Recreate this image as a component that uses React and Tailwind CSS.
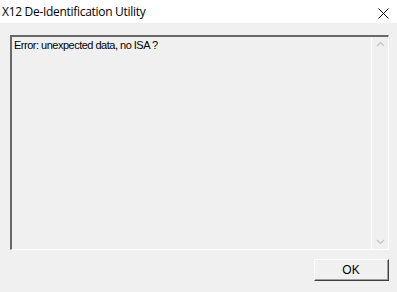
export default function App() {
  return (
    <div className="w-[397px] h-[292px] bg-[#f0f0f0] flex flex-col overflow-hidden">
      {/* title bar */}
      <div className="h-[23px] bg-white flex items-center justify-between pl-[2px] pr-[8px]">
        <span className="text-[12px] tracking-[-0.3px] text-black" style={{ fontFamily: '"Open Sans", "Noto Sans", sans-serif' }}>X12 De-Identification Utility</span>
        <svg width="11" height="11" viewBox="0 0 11 11" className="mt-[3px]">
          <path d="M0.5 0.5 L10.5 10.5 M10.5 0.5 L0.5 10.5" stroke="#000" strokeWidth="1" fill="none" />
        </svg>
      </div>

      {/* body */}
      <div className="flex-1 flex flex-col pl-[10px] pr-[8px] pt-[12px]">
        <div className="h-[215px] flex border-t-2 border-l-2 border-t-[#696969] border-l-[#696969] border-b border-r border-b-white border-r-white">
          <div className="flex-1 pl-[2px] pt-[2px] text-[11px] tracking-[-0.5px] text-black leading-[13px]" style={{ fontFamily: '"Liberation Sans", Arial, sans-serif' }}>
            Error: unexpected data, no ISA ?
          </div>
          <div className="w-[17px] flex flex-col justify-between items-center border-l border-white py-[4px]">
            <svg width="9" height="6" viewBox="0 0 9 6">
              <path d="M1 5 L4.5 1.5 L8 5" stroke="#c8c8c8" strokeWidth="1.5" fill="none" />
            </svg>
            <svg width="9" height="6" viewBox="0 0 9 6">
              <path d="M1 1 L4.5 4.5 L8 1" stroke="#c8c8c8" strokeWidth="1.5" fill="none" />
            </svg>
          </div>
        </div>
        <div className="flex justify-end pt-[9px]">
          <button className="w-[75px] h-[22px] border border-t-white border-l-white border-b-[#404040] border-r-[#404040] bg-[#f0f0f0] flex">
            <span className="flex-1 flex items-center justify-center border-b border-r border-b-[#a0a0a0] border-r-[#a0a0a0] text-[12px] text-black" style={{ fontFamily: '"Liberation Sans", Arial, sans-serif' }}>OK</span>
          </button>
        </div>
      </div>
    </div>
  );
}
